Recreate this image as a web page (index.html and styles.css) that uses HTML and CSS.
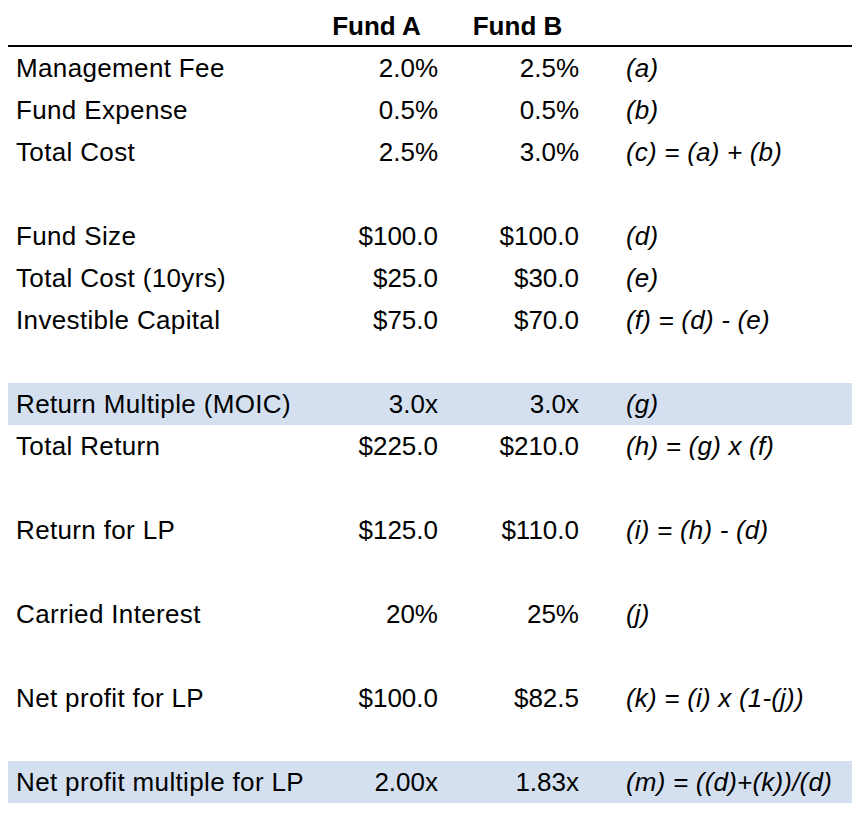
FILE: index.html
```html
<!DOCTYPE html>
<html lang="en">
<head>
<meta charset="utf-8">
<title>Fund comparison</title>
<link rel="stylesheet" href="styles.css">
</head>
<body>
<table class="sheet">
  <colgroup>
    <col class="c-label">
    <col class="c-num">
    <col class="c-num">
    <col class="c-formula">
  </colgroup>
  <thead>
    <tr>
      <th class="label"></th>
      <th class="head">Fund A</th>
      <th class="head">Fund B</th>
      <th class="formula"></th>
    </tr>
  </thead>
  <tbody>
    <tr><td class="label">Management Fee</td><td class="num">2.0%</td><td class="num">2.5%</td><td class="formula">(a)</td></tr>
    <tr><td class="label">Fund Expense</td><td class="num">0.5%</td><td class="num">0.5%</td><td class="formula">(b)</td></tr>
    <tr><td class="label">Total Cost</td><td class="num">2.5%</td><td class="num">3.0%</td><td class="formula">(c) = (a) + (b)</td></tr>
    <tr class="blank"><td></td><td></td><td></td><td></td></tr>
    <tr><td class="label">Fund Size</td><td class="num">$100.0</td><td class="num">$100.0</td><td class="formula">(d)</td></tr>
    <tr><td class="label">Total Cost (10yrs)</td><td class="num">$25.0</td><td class="num">$30.0</td><td class="formula">(e)</td></tr>
    <tr><td class="label">Investible Capital</td><td class="num">$75.0</td><td class="num">$70.0</td><td class="formula">(f) = (d) - (e)</td></tr>
    <tr class="blank"><td></td><td></td><td></td><td></td></tr>
    <tr class="hl"><td class="label">Return Multiple (MOIC)</td><td class="num">3.0x</td><td class="num">3.0x</td><td class="formula">(g)</td></tr>
    <tr><td class="label">Total Return</td><td class="num">$225.0</td><td class="num">$210.0</td><td class="formula">(h) = (g) x (f)</td></tr>
    <tr class="blank"><td></td><td></td><td></td><td></td></tr>
    <tr><td class="label">Return for LP</td><td class="num">$125.0</td><td class="num">$110.0</td><td class="formula">(i) = (h) - (d)</td></tr>
    <tr class="blank"><td></td><td></td><td></td><td></td></tr>
    <tr><td class="label">Carried Interest</td><td class="num">20%</td><td class="num">25%</td><td class="formula">(j)</td></tr>
    <tr class="blank"><td></td><td></td><td></td><td></td></tr>
    <tr><td class="label">Net profit for LP</td><td class="num">$100.0</td><td class="num">$82.5</td><td class="formula">(k) = (i) x (1-(j))</td></tr>
    <tr class="blank"><td></td><td></td><td></td><td></td></tr>
    <tr class="hl"><td class="label">Net profit multiple for LP</td><td class="num">2.00x</td><td class="num">1.83x</td><td class="formula">(m) = ((d)+(k))/(d)</td></tr>
  </tbody>
</table>
</body>
</html>
```

FILE: styles.css
```css
html, body {
  background: #ffffff;
}

body {
  margin: 8px;
  color: #000000;
  font-family: "Liberation Sans", Arial, Helvetica, sans-serif;
  font-size: 26px;
}

.sheet {
  width: 846px;
  table-layout: fixed;
  border-collapse: separate;
  border-spacing: 0;
}

.c-label { width: 298px; }
.c-num { width: 141px; }
.c-formula { width: 266px; }

.sheet th {
  padding: 4px 0;
  line-height: 29px;
  border-bottom: 2px solid #000000;
  font-weight: bold;
  white-space: nowrap;
}

.sheet th.head {
  text-align: center;
}

.sheet td {
  height: 42px;
  padding: 0;
  line-height: 42px;
  white-space: nowrap;
  font-weight: normal;
}

.sheet .label {
  padding-left: 8px;
  text-align: left;
}

.sheet td.label {
  letter-spacing: 0.35px;
}

.sheet td.num {
  padding-right: 9px;
  text-align: right;
}

.sheet td.formula {
  padding-left: 38px;
  font-style: italic;
  letter-spacing: 0.2px;
  text-align: left;
}

.sheet tr.hl td {
  background: #d4e0f0;
}
```
